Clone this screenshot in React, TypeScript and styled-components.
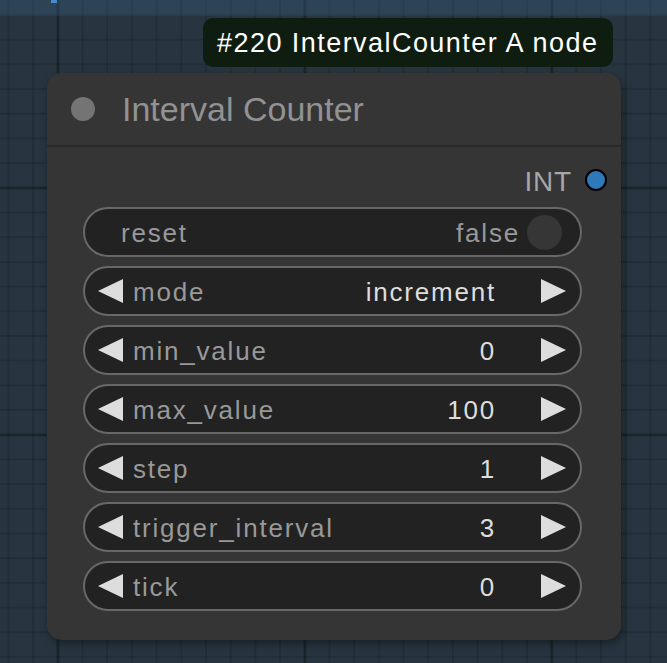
import styled, { createGlobalStyle } from "styled-components"

const GlobalStyle = createGlobalStyle`
  html, body {
    margin: 0;
    padding: 0;
    background: #283540;
  }
  * {
    box-sizing: border-box;
  }
`

const Canvas = styled.div`
  position: relative;
  width: 667px;
  height: 663px;
  overflow: hidden;
  font-family: "Liberation Sans", Arial, sans-serif;
  background-color: #283540;
  background-image:
    linear-gradient(to right, rgba(0, 0, 0, 0.22) 3px, transparent 3px),
    linear-gradient(to bottom, rgba(0, 0, 0, 0.22) 3px, transparent 3px),
    linear-gradient(to right, rgba(0, 0, 0, 0.14) 2px, transparent 2px),
    linear-gradient(to bottom, rgba(0, 0, 0, 0.14) 2px, transparent 2px);
  background-size: 247px 100%, 100% 247px, 24.7px 100%, 100% 24.7px;
  background-position: 56.5px 0, 0 186.5px, 7.5px 0, 0 14px;
`

const GroupBand = styled.div`
  position: absolute;
  left: 0;
  top: 0;
  width: 100%;
  height: 16px;
  background: rgba(55, 95, 130, 0.35);
`

const LinkStub = styled.div`
  position: absolute;
  left: 51px;
  top: 0;
  width: 6px;
  height: 3px;
  background: #4a8acb;
`

const Tooltip = styled.div`
  position: absolute;
  left: 203px;
  top: 18px;
  width: 410px;
  height: 49px;
  border-radius: 10px;
  background: #0f1d11;
  color: #ffffff;
  font-size: 27px;
  letter-spacing: 1.45px;
  display: flex;
  align-items: center;
  padding: 2px 0 0 14px;
  white-space: nowrap;
`

const Node = styled.div`
  position: absolute;
  left: 47px;
  top: 73px;
  width: 574px;
  height: 567px;
  border-radius: 15px;
  background: #353535;
  box-shadow: 2px 4px 10px rgba(0, 0, 0, 0.4);
  display: flex;
  flex-direction: column;
`

const TitleBar = styled.div`
  height: 74px;
  display: flex;
  align-items: center;
  gap: 27px;
  padding-left: 24px;
  border-bottom: 2px solid #2a2a2a;
`

const TitleDot = styled.span`
  width: 24px;
  height: 24px;
  border-radius: 50%;
  background: #747474;
  flex-shrink: 0;
`

const Title = styled.span`
  color: #929292;
  font-size: 34px;
`

const Body = styled.div`
  display: flex;
  flex-direction: column;
  padding: 20px 39px 27px 36px;
`

const OutputRow = styled.div`
  height: 26px;
  display: flex;
  align-items: center;
  justify-content: flex-end;
  gap: 13px;
  margin-right: -25px;
  margin-bottom: 14px;
`

const OutputLabel = styled.span`
  color: #a6a6a6;
  font-size: 28px;
  letter-spacing: 0.8px;
  padding-top: 4px;
`

const Slot = styled.span`
  width: 22px;
  height: 22px;
  border-radius: 50%;
  background: #2f79bb;
  border: 2px solid #000;
`

const WidgetList = styled.div`
  display: flex;
  flex-direction: column;
  gap: 9px;
`

const Widget = styled.div<{ $toggle?: boolean }>`
  height: 50px;
  border-radius: 25px;
  border: 2px solid #686868;
  background: #222222;
  display: flex;
  align-items: center;
  padding: ${(p) => (p.$toggle ? "0 18px 0 36px" : "0 14px 0 13px")};
  font-size: 26px;
  letter-spacing: 1.8px;
`

const Label = styled.span`
  color: #999999;
  flex: 1;
  margin-left: 10px;
  padding-top: 3px;
  white-space: nowrap;
`

const ToggleLabel = styled(Label)`
  margin-left: 0;
`

const Value = styled.span`
  color: #dddddd;
  white-space: nowrap;
  margin-right: 45px;
  padding-top: 3px;
`

const ToggleValue = styled.span`
  color: #999999;
  margin-right: 7px;
  padding-top: 3px;
`

const Knob = styled.span`
  width: 35px;
  height: 35px;
  border-radius: 50%;
  background: #363636;
`

const ArrowSvg = styled.svg`
  flex-shrink: 0;
  display: block;
`

function Arrow({ dir }: { dir: "left" | "right" }) {
  return (
    <ArrowSvg width="25" height="24" viewBox="0 0 25 24">
      <polygon
        points={dir === "left" ? "0,12 25,0 25,24" : "0,0 25,12 0,24"}
        fill="#dddddd"
      />
    </ArrowSvg>
  )
}

const combos = [
  { name: "mode", value: "increment" },
  { name: "min_value", value: "0" },
  { name: "max_value", value: "100" },
  { name: "step", value: "1" },
  { name: "trigger_interval", value: "3" },
  { name: "tick", value: "0" },
]

export default function App() {
  return (
    <Canvas>
      <GlobalStyle />
      <GroupBand>
        <LinkStub />
      </GroupBand>
      <Tooltip>#220 IntervalCounter A node</Tooltip>
      <Node>
        <TitleBar>
          <TitleDot />
          <Title>Interval Counter</Title>
        </TitleBar>
        <Body>
          <OutputRow>
            <OutputLabel>INT</OutputLabel>
            <Slot />
          </OutputRow>
          <WidgetList>
            <Widget $toggle>
              <ToggleLabel>reset</ToggleLabel>
              <ToggleValue>false</ToggleValue>
              <Knob />
            </Widget>
            {combos.map((c) => (
              <Widget key={c.name}>
                <Arrow dir="left" />
                <Label>{c.name}</Label>
                <Value>{c.value}</Value>
                <Arrow dir="right" />
              </Widget>
            ))}
          </WidgetList>
        </Body>
      </Node>
    </Canvas>
  )
}
